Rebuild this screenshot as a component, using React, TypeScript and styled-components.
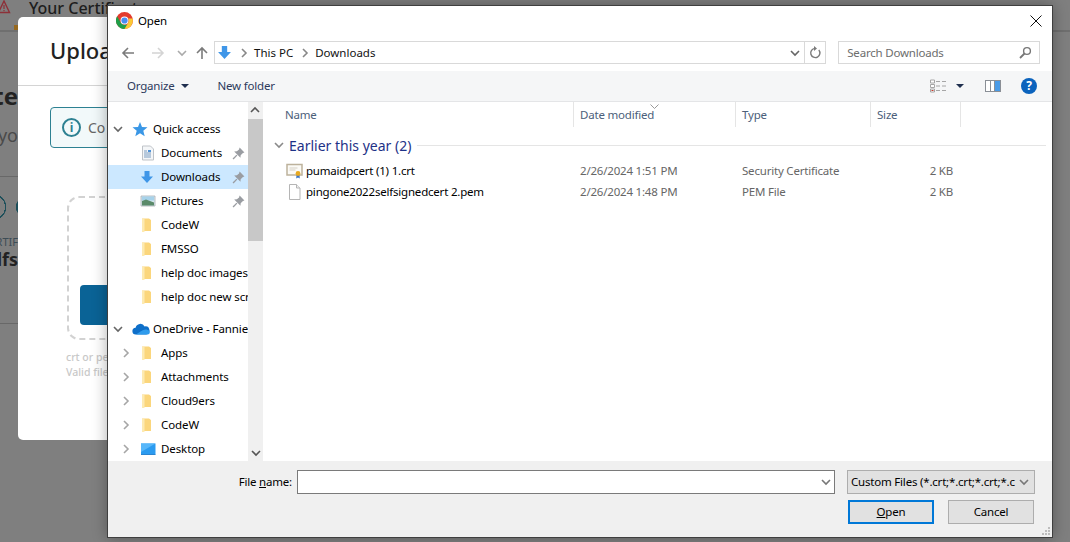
import React from 'react'
import styled, { createGlobalStyle } from 'styled-components'

const GlobalStyle = createGlobalStyle`
  html, body {
    margin: 0;
    padding: 0;
    width: 1070px;
    height: 542px;
    overflow: hidden;
    background: #7f7f7f;
  }
  * { box-sizing: border-box; }
`

const Chrome = () => (
  <svg width="17" height="17" viewBox="0 0 24 24">
    <circle cx="12" cy="12" r="12" fill="#e33b2e" />
    <path d="M12 24A12 12 0 0 1 1.6 6l5.2 9a6 6 0 0 0 5.2 3l5.2 0z" fill="#1f9e48" />
    <path d="M12 24l5.2-9a6 6 0 0 0 0-6h6.2A12 12 0 0 1 12 24z" fill="#fcc934" />
    <circle cx="12" cy="12" r="5.6" fill="#fff" />
    <circle cx="12" cy="12" r="4.4" fill="#4a8df0" />
  </svg>
)

const DownArrow = ({ size = 14 }: { size?: number }) => (
  <svg width={size} height={size} viewBox="0 0 14 14">
    <path d="M4.5 1h5v5.5H13L7 13 1 6.5h3.5z" fill="#3f96e8" />
  </svg>
)

const Chevron = ({ dir, color = '#888' }: { dir: 'right' | 'down'; color?: string }) => (
  <svg width="10" height="10" viewBox="0 0 10 10">
    <path
      d={dir === 'right' ? 'M3 1l4 4-4 4' : 'M1 3l4 4 4-4'}
      fill="none"
      stroke={color}
      strokeWidth="1.6"
    />
  </svg>
)

const Folder = () => (
  <svg width="16" height="16" viewBox="0 0 16 16">
    <path d="M2 1.5h7l2 1.500v11H4l-2 1z" fill="#fbd67c" />
    <path d="M2 2h2.500v13H2z" fill="#fdeab2" />
  </svg>
)

const Star = () => (
  <svg width="16" height="16" viewBox="0 0 16 16">
    <path d="M8 1l2 5 5.5.3-4.2 3.5 1.4 5.4L8 12.2l-4.700 3 1.400-5.400L.5 6.300 6 6z" fill="#3a97e6" />
  </svg>
)

const Doc = () => (
  <svg width="16" height="16" viewBox="0 0 16 16">
    <path d="M2.500 1h8l3 3v11h-11z" fill="#f4f6f8" stroke="#bfc3c8" />
    <path d="M4 6h3M4 8h7M4 10h7M4 12h7" stroke="#7a9cc0" />
    <path d="M8 5h3v2H8z" fill="#4d92d8" />
  </svg>
)

const Picture = () => (
  <svg width="16" height="16" viewBox="0 0 16 16">
    <path d="M1 3h14v10H1z" fill="#d8e8ee" stroke="#a9adb2" strokeWidth="0.8" />
    <path d="M2 3.500h12v4H2z" fill="#a7d2ea" />
    <path d="M2 8l4-1.500 8 3v3H2z" fill="#5b8a6a" />
  </svg>
)

const Cloud = () => (
  <svg width="18" height="14" viewBox="0 0 18 14">
    <path d="M4 12.500a3.400 3.400 0 0 1-.4-6.800 4.800 4.800 0 0 1 9-1.200 3.800 3.800 0 0 1 1.600 8z" fill="#0e6fc9" />
    <path d="M4 12.500h11.500a2.300 2.300 0 0 0 0-4.600c-3-1-5.600 1-7 1.600L4 12.500z" fill="#2f9bec" />
  </svg>
)

const Screen = () => (
  <svg width="16" height="16" viewBox="0 0 16 16">
    <path d="M1 2.500h14.500v11H1z" fill="#2b9bf0" />
    <path d="M1 2.500h14.500L1 11z" fill="#57b7fa" />
    <path d="M1 13h14.500v.8H1z" fill="#0f74c8" />
  </svg>
)

const Pin = () => (
  <svg width="13" height="13" viewBox="0 0 12 12">
    <path d="M7 .5l4.500 4.500-1.400.6L8 7.500 7.800 10 2 4.200 4.500 4l2-1.800z" fill="#9a9da2" />
    <path d="M4.500 7.500L1 11" stroke="#9a9da2" strokeWidth="1.300" />
  </svg>
)

const CertIcon = () => (
  <svg width="17" height="16" viewBox="0 0 17 16">
    <path d="M1 1.500h15v10.500H1z" fill="#fbfaf6" stroke="#bdb29c" strokeWidth="1.500" />
    <path d="M3.500 5h8M3.500 7h6" stroke="#d5d0c4" />
    <path d="M10.500 12l-.3 3.500 1.800-1 1.800 1-.3-3.500z" fill="#3a73c4" />
    <circle cx="12" cy="10.500" r="2.400" fill="#e8a920" />
  </svg>
)

const PageIcon = () => (
  <svg width="17" height="16" viewBox="0 0 17 16">
    <path d="M3.500.5h7l3.500 3.500v11.500H3.500z" fill="#fff" stroke="#b5b5b5" />
    <path d="M10.500.5V4H14" fill="#f0f0f0" stroke="#b5b5b5" />
  </svg>
)

const FileRows = [
  { icon: <CertIcon />, name: 'pumaidpcert (1) 1.crt', date: '2/26/2024 1:51 PM', type: 'Security Certificate', size: '2 KB' },
  { icon: <PageIcon />, name: 'pingone2022selfsignedcert 2.pem', date: '2/26/2024 1:48 PM', type: 'PEM File', size: '2 KB' },
]

export default function App() {
  return (
    <Page>
      <GlobalStyle />
      <PageHeader>
        <WarnIcon viewBox="0 0 12 14">
          <path d="M-1.500 12.500L4 1l5.500 11.500z" fill="none" stroke="#8d3038" strokeWidth="1.400" />
          <path d="M4 5v4M4 10v1.200" stroke="#8d3038" strokeWidth="1.200" />
        </WarnIcon>
        <PageTitle>Your Certificates</PageTitle>
      </PageHeader>
      <TabMark />
      <HeaderRule />
      <SideStrip>
        <SideHeading>te</SideHeading>
        <SideSub>yo</SideSub>
        <SideRule />
        <SideBadge />
        <SideLabel>RTIF</SideLabel>
        <SideValue>lfs</SideValue>
        <SideRule $bottom />
      </SideStrip>

      <Modal>
        <ModalTitle>Upload</ModalTitle>
        <ModalBody>
          <InfoBox>
            <InfoIcon>i</InfoIcon>
            <InfoText>Co</InfoText>
          </InfoBox>
          <DropZone>
            <DropButton />
          </DropZone>
          <Hint>crt or pe</Hint>
          <Hint>Valid file</Hint>
        </ModalBody>
      </Modal>

      <Dialog>
        <TitleBar>
          <Chrome />
          <TitleText>Open</TitleText>
          <CloseIcon width="12" height="12" viewBox="0 0 12 12">
            <path d="M.5.5l11 11M11.500.5l-11 11" stroke="#111" strokeWidth="1" />
          </CloseIcon>
        </TitleBar>

        <NavBar>
          <NavArrow viewBox="0 0 14 14" width="14" height="14">
            <path d="M13 7H2M7 2L2 7l5 5" fill="none" stroke="#7b7b7b" strokeWidth="1.600" />
          </NavArrow>
          <NavArrow viewBox="0 0 14 14" width="14" height="14" $gap={16}>
            <path d="M1 7h11M7 2l5 5-5 5" fill="none" stroke="#d4d4d4" strokeWidth="1.600" />
          </NavArrow>
          <SmallChevron>
            <Chevron dir="down" color="#aaa" />
          </SmallChevron>
          <NavArrow viewBox="0 0 14 14" width="14" height="14" $gap={8}>
            <path d="M7 13V2M2 7l5-5 5 5" fill="none" stroke="#7b7b7b" strokeWidth="1.600" />
          </NavArrow>
          <AddressBox>
            <AddressIcon>
              <DownArrow size={15} />
            </AddressIcon>
            <Crumb><Chevron dir="right" /></Crumb>
            <CrumbText>This PC</CrumbText>
            <Crumb><Chevron dir="right" /></Crumb>
            <CrumbText>Downloads</CrumbText>
            <AddressChevron><Chevron dir="down" color="#666" /></AddressChevron>
            <RefreshCell>
              <svg width="12" height="13" viewBox="0 0 12 13">
                <path d="M9.800 4A4.600 4.600 0 1 1 6 2.400" fill="none" stroke="#7a7a7a" strokeWidth="1.400" />
                <path d="M5 0v5l3-2.500z" fill="#7a7a7a" />
              </svg>
            </RefreshCell>
          </AddressBox>
          <SearchBox>
            <span>Search Downloads</span>
            <svg width="13" height="13" viewBox="0 0 13 13">
              <circle cx="8" cy="5" r="3.400" fill="none" stroke="#777" strokeWidth="1.400" />
              <path d="M5.500 7.500L1 12" stroke="#777" strokeWidth="1.800" />
            </svg>
          </SearchBox>
        </NavBar>

        <ToolBar>
          <ToolText>Organize</ToolText>
          <Caret />
          <ToolText $gap={29}>New folder</ToolText>
          <ToolSpacer />
          <svg width="17" height="14" viewBox="0 0 17 14">
            <path d="M.5 1h4v3h-4zM.5 5.500h4v3h-4zM.5 10h4v3h-4z" fill="#fff" stroke="#a6a6a6" />
            <path d="M6 2.500h4M12 2.500h4M6 7h4M12 7h4M6 11.500h4M12 11.500h4" stroke="#a6a6a6" />
            <path d="M1.500 11h2v1h-2z" fill="#c0392b" />
          </svg>
          <Caret $gap={9} />
          <PaneIcon viewBox="0 0 16 12" width="16" height="12">
            <path d="M0 0h16v12H0z" fill="#8a8f96" />
            <path d="M1 1h4v10H1zM6 1h3v10H6z" fill="#fff" />
            <path d="M10 1h5v10h-5z" fill="#4a9be6" />
          </PaneIcon>
          <HelpIcon>?</HelpIcon>
        </ToolBar>

        <Body>
          <TreePane>
            <TreeItem level={0} chevron="down" icon={<Star />} label="Quick access" />
            <TreeItem level={1} icon={<Doc />} label="Documents" pinned />
            <TreeItem level={1} icon={<DownArrow />} label="Downloads" pinned active />
            <TreeItem level={1} icon={<Picture />} label="Pictures" pinned />
            <TreeItem level={1} icon={<Folder />} label="CodeW" />
            <TreeItem level={1} icon={<Folder />} label="FMSSO" />
            <TreeItem level={1} icon={<Folder />} label="help doc images" />
            <TreeItem level={1} icon={<Folder />} label="help doc new screenshots" />
            <TreeGap />
            <TreeItem level={0} chevron="down" icon={<Cloud />} label="OneDrive - Fannie Mae" />
            <TreeItem level={1} chevron="right" icon={<Folder />} label="Apps" />
            <TreeItem level={1} chevron="right" icon={<Folder />} label="Attachments" />
            <TreeItem level={1} chevron="right" icon={<Folder />} label="Cloud9ers" />
            <TreeItem level={1} chevron="right" icon={<Folder />} label="CodeW" />
            <TreeItem level={1} chevron="right" icon={<Screen />} label="Desktop" />
          </TreePane>
          <ScrollBar>
            <ScrollButton><Chevron dir="down" color="#555" /></ScrollButton>
            <ScrollThumb />
            <ScrollButton $down><Chevron dir="down" color="#555" /></ScrollButton>
          </ScrollBar>
          <ListPane>
            <SortMark>
              <svg width="9" height="5" viewBox="0 0 9 5">
                <path d="M.5.500l4 4 4-4" fill="none" stroke="#999" />
              </svg>
            </SortMark>
            <ColumnRow>
              <ColumnHead>Name</ColumnHead>
              <ColumnHead>Date modified</ColumnHead>
              <ColumnHead>Type</ColumnHead>
              <ColumnHead>Size</ColumnHead>
            </ColumnRow>
            <GroupRow>
              <Chevron dir="down" color="#8a8a8a" />
              <GroupTitle>Earlier this year (2)</GroupTitle>
              <GroupLine />
            </GroupRow>
            {FileRows.map(f => (
              <FileRow key={f.name}>
                <FileName>{f.icon}<span>{f.name}</span></FileName>
                <FileMeta>{f.date}</FileMeta>
                <FileMeta>{f.type}</FileMeta>
                <FileSize>{f.size}</FileSize>
              </FileRow>
            ))}
          </ListPane>
        </Body>

        <Footer>
          <FooterRow>
            <FieldLabel>File <u>n</u>ame:</FieldLabel>
            <NameInput>
              <Chevron dir="down" color="#777" />
            </NameInput>
            <FilterSelect>
              <FilterText>Custom Files (*.crt;*.crt;*.crt;*.c</FilterText>
              <Chevron dir="down" color="#777" />
            </FilterSelect>
          </FooterRow>
          <ButtonRow>
            <DialogButton $primary><u>O</u>pen</DialogButton>
            <DialogButton>Cancel</DialogButton>
          </ButtonRow>
          <Grip width="10" height="10" viewBox="0 0 10 10">
            <path d="M7 1h2v2H7zM4 4h2v2H4zM7 4h2v2H7zM1 7h2v2H1zM4 7h2v2H4zM7 7h2v2H7z" fill="#bdbdbd" />
          </Grip>
        </Footer>
      </Dialog>
    </Page>
  )
}

type TreeItemProps = {
  level: number
  label: string
  icon: React.ReactNode
  chevron?: 'right' | 'down'
  pinned?: boolean
  active?: boolean
}

const TreeItem = ({ level, label, icon, chevron, pinned, active }: TreeItemProps) => (
  <TreeRow $level={level} $active={active}>
    <TreeChevron>{chevron && <Chevron dir={chevron} color={chevron === 'down' ? '#666' : '#a6a6a6'} />}</TreeChevron>
    <TreeIcon>{icon}</TreeIcon>
    <TreeLabel>{label}</TreeLabel>
    {pinned && <PinSlot><Pin /></PinSlot>}
  </TreeRow>
)

const Page = styled.div`
  position: relative;
  width: 1070px;
  height: 542px;
  overflow: hidden;
  background: #7f7f7f;
  font-family: "Noto Sans", sans-serif;
`

const PageHeader = styled.div`
  height: 30px;
  display: flex;
  align-items: flex-start;
  overflow: hidden;
`

const WarnIcon = styled.svg`
  width: 12px;
  height: 14px;
  flex: none;
`

const PageTitle = styled.div`
  margin-left: 17px;
  margin-top: -2px;
  font-size: 16px;
  font-weight: 500;
  line-height: 20px;
  color: #1d1d1d;
  white-space: nowrap;
`

const TabMark = styled.div`
  position: absolute;
  left: 14px;
  top: 25px;
  width: 4px;
  height: 5px;
  background: #97691f;
`

const HeaderRule = styled.div`
  height: 2px;
  background: #6f6f6f;
`

const SideStrip = styled.div`
  width: 18px;
  overflow: hidden;
  display: flex;
  flex-direction: column;
  align-items: flex-end;
`

const SideHeading = styled.div`
  margin-top: 49px;
  font-size: 24px;
  font-weight: 700;
  line-height: 30px;
  color: #222;
`

const SideSub = styled.div`
  margin-top: 14px;
  font-size: 18px;
  line-height: 20px;
  color: #4a4a4a;
`

const SideRule = styled.div<{ $bottom?: boolean }>`
  flex: none;
  width: 18px;
  height: 1px;
  margin-top: ${p => (p.$bottom ? '52px' : '31px')};
  background: #686868;
`

const SideBadge = styled.div`
  margin-top: 17px;
  width: 18px;
  height: 26px;
  flex: none;
  background:
    radial-gradient(circle at -7px 13px, transparent 12px, #1d4f5a 12px, #1d4f5a 13px, transparent 13.5px),
    radial-gradient(circle at 25px 13px, #1d4f5a 9px, transparent 9.5px);
`

const SideLabel = styled.div`
  margin-top: 15px;
  font-size: 11px;
  line-height: 14px;
  color: #3d4c55;
  white-space: nowrap;
`

const SideValue = styled.div`
  margin-top: -2px;
  font-size: 18px;
  font-weight: 700;
  line-height: 24px;
  color: #222;
`

const Modal = styled.div`
  position: absolute;
  left: 18px;
  top: 17px;
  width: 500px;
  height: 423px;
  background: #fff;
  border-radius: 5px;
`

const ModalTitle = styled.div`
  height: 69px;
  padding: 16px 0 0 32px;
  font-size: 22px;
  font-weight: 500;
  line-height: 34px;
  color: #222;
  border-bottom: 1px solid #d4d4d4;
`

const ModalBody = styled.div`
  padding: 21px 0 0 32px;
`

const InfoBox = styled.div`
  width: 300px;
  height: 41px;
  display: flex;
  align-items: center;
  padding-left: 11px;
  background: #f2f9fa;
  border: 1px solid #2d8192;
  border-radius: 4px;
`

const InfoIcon = styled.div`
  width: 19px;
  height: 19px;
  border: 2px solid #2d8192;
  border-radius: 50%;
  color: #2d8192;
  font-size: 12px;
  font-weight: 700;
  line-height: 15px;
  text-align: center;
`

const InfoText = styled.div`
  margin-left: 7px;
  font-size: 14px;
  color: #666;
`

const DropZone = styled.div`
  width: 300px;
  height: 144px;
  margin: 48px 0 10px 17px;
  padding: 87px 0 0 11px;
  border: 2px dashed #d2d2d2;
  border-radius: 12px;
`

const DropButton = styled.div`
  width: 120px;
  height: 40px;
  background: #0a6396;
  border-radius: 4px;
`

const Hint = styled.div`
  margin-left: 16px;
  font-size: 10.500px;
  font-weight: 500;
  line-height: 15px;
  color: #c8c8c8;
`

const Dialog = styled.div`
  position: absolute;
  left: 107px;
  top: 5px;
  width: 946px;
  height: 533px;
  display: flex;
  flex-direction: column;
  background: #fff;
  border: 1px solid #3f3f3f;
  box-shadow: 0 0 14px rgba(0, 0, 0, 0.32);
  font-family: "Noto Sans", sans-serif;
  font-size: 11.500px;
  letter-spacing: -0.2px;
  color: #000;
`

const TitleBar = styled.div`
  flex: none;
  height: 29px;
  display: flex;
  align-items: center;
  padding: 0 10px 0 8px;
`

const TitleText = styled.span`
  margin-left: 5px;
`

const CloseIcon = styled.svg`
  margin-left: auto;
`

const NavBar = styled.div`
  flex: none;
  height: 36px;
  display: flex;
  align-items: center;
  padding: 0 12px 1px 13px;
`

const NavArrow = styled.svg<{ $gap?: number }>`
  flex: none;
  margin-left: ${p => p.$gap ?? 0}px;
`

const SmallChevron = styled.span`
  display: flex;
  margin-left: 12px;
`

const AddressBox = styled.div`
  width: 613px;
  height: 23px;
  margin-left: 5px;
  display: flex;
  align-items: center;
  padding-left: 2px;
  border: 1px solid #d9d9d9;
`

const AddressIcon = styled.span`
  display: flex;
`

const Crumb = styled.span`
  display: flex;
  margin: 0 5px 0 7px;
`

const CrumbText = styled.span`
  color: #111;
  letter-spacing: 0;
  margin-bottom: 1px;
`

const AddressChevron = styled.span`
  display: flex;
  margin-left: auto;
  margin-right: 4px;
`

const RefreshCell = styled.span`
  width: 21px;
  height: 100%;
  display: flex;
  align-items: center;
  justify-content: center;
  border-left: 1px solid #d9d9d9;
`

const SearchBox = styled.div`
  width: 202px;
  height: 23px;
  margin-left: 12px;
  display: flex;
  align-items: center;
  justify-content: space-between;
  padding: 0 7px 0 8px;
  border: 1px solid #d9d9d9;
  color: #6d6d6d;
`

const ToolBar = styled.div`
  flex: none;
  height: 31px;
  display: flex;
  align-items: center;
  padding: 0 15px 0 19px;
  background: #f5f6f7;
  border-bottom: 1px solid #e4e5e7;
`

const ToolText = styled.span<{ $gap?: number }>`
  margin-left: ${p => p.$gap ?? 0}px;
  margin-bottom: 2px;
  color: #2d3a5c;
`

const Caret = styled.span<{ $gap?: number }>`
  width: 0;
  height: 0;
  margin-left: ${p => p.$gap ?? 6}px;
  border-style: solid;
  border-width: 4px 4px 0 4px;
  border-color: #1f2f4f transparent transparent transparent;
`

const ToolSpacer = styled.span`
  flex: 1;
`

const PaneIcon = styled.svg`
  margin-left: 21px;
`

const HelpIcon = styled.span`
  width: 16px;
  height: 16px;
  margin-left: 20px;
  border-radius: 50%;
  background: #0b63bd;
  color: #fff;
  font-size: 12px;
  font-weight: 700;
  line-height: 16px;
  text-align: center;
`

const Body = styled.div`
  flex: 1;
  min-height: 0;
  display: flex;
`

const TreePane = styled.div`
  width: 140px;
  flex: none;
  padding-top: 15px;
  overflow: hidden;
`

const TreeRow = styled.div<{ $level: number; $active?: boolean }>`
  height: 24px;
  display: flex;
  align-items: center;
  padding-left: ${p => p.$level * 8}px;
  background: ${p => (p.$active ? '#cce8ff' : 'transparent')};
  white-space: nowrap;
  overflow: hidden;
`

const TreeChevron = styled.span`
  flex: none;
  width: 20px;
  display: flex;
  justify-content: center;
`

const TreeIcon = styled.span`
  flex: none;
  width: 20px;
  margin-left: 4px;
  display: flex;
`

const TreeLabel = styled.span`
  flex: none;
  margin: 0 0 2px 1px;
  letter-spacing: -0.1px;
  color: #000;
`

const PinSlot = styled.span`
  display: flex;
  margin-left: auto;
  padding-right: 3px;
`

const TreeGap = styled.div`
  height: 8px;
`

const ScrollBar = styled.div`
  width: 15px;
  flex: none;
  display: flex;
  flex-direction: column;
  background: #f0f0f0;
`

const ScrollButton = styled.div<{ $down?: boolean }>`
  height: 17px;
  display: flex;
  align-items: center;
  justify-content: center;
  transform: ${p => (p.$down ? 'none' : 'rotate(180deg)')};
  margin-top: ${p => (p.$down ? 'auto' : '0')};
`

const ScrollThumb = styled.div`
  height: 122px;
  background: #c8c8c8;
`

const ListPane = styled.div`
  position: relative;
  flex: 1;
  min-width: 0;
  padding-left: 13px;
  border-left: 3px solid #fff;
`

const SortMark = styled.span`
  position: absolute;
  left: 384px;
  top: 0;
  line-height: 5px;
`

const ColumnRow = styled.div`
  height: 25px;
  display: grid;
  grid-template-columns: 295px 162px 135px 90px;
`

const ColumnHead = styled.div`
  padding-left: 6px;
  line-height: 25px;
  color: #4c607a;
  border-right: 1px solid #e5e5e5;
`

const GroupRow = styled.div`
  height: 33px;
  margin-left: -5px;
  display: flex;
  align-items: center;
  padding-top: 3px;
  padding-right: 6px;
`

const GroupTitle = styled.span`
  margin-left: 5px;
  font-size: 14px;
  letter-spacing: 0;
  color: #1e3287;
  white-space: nowrap;
`

const GroupLine = styled.span`
  flex: 1;
  height: 1px;
  margin-left: 6px;
  background: #e5e5e5;
`

const FileRow = styled.div`
  height: 21px;
  display: grid;
  grid-template-columns: 295px 162px 135px 90px;
  align-items: center;
`

const FileName = styled.div`
  display: flex;
  align-items: center;
  gap: 3px;
  padding-left: 7px;
  white-space: nowrap;
`

const FileMeta = styled.div`
  padding-left: 6px;
  color: #666;
`

const FileSize = styled.div`
  padding-right: 8px;
  text-align: right;
  color: #666;
`

const Footer = styled.div`
  position: relative;
  flex: none;
  height: 76px;
  padding: 9px 17px 0 0;
  background: #f0f0f0;
`

const FooterRow = styled.div`
  display: flex;
  align-items: center;
  justify-content: flex-end;
`

const FieldLabel = styled.span`
  margin: 0 5px 2px 0;
`

const NameInput = styled.div`
  width: 538px;
  height: 24px;
  display: flex;
  align-items: center;
  justify-content: flex-end;
  padding-right: 3px;
  background: #fff;
  border: 1px solid #7a7a7a;
`

const FilterSelect = styled.div`
  width: 188px;
  height: 24px;
  margin-left: 12px;
  display: flex;
  align-items: center;
  padding: 0 5px 0 3px;
  background: #e1e1e1;
  border: 1px solid #adadad;
  white-space: nowrap;
`

const FilterText = styled.span`
  flex: 1;
  min-width: 0;
  margin-bottom: 2px;
  overflow: hidden;
`

const ButtonRow = styled.div`
  display: flex;
  justify-content: flex-end;
  gap: 14px;
  margin-top: 6px;
  padding-right: 1px;
`

const DialogButton = styled.div<{ $primary?: boolean }>`
  width: 86px;
  height: 24px;
  background: #e1e1e1;
  border: ${p => (p.$primary ? '2px solid #0078d7' : '1px solid #adadad')};
  line-height: ${p => (p.$primary ? '20px' : '22px')};
  text-align: center;
`

const Grip = styled.svg`
  position: absolute;
  right: 1px;
  bottom: 1px;
`
